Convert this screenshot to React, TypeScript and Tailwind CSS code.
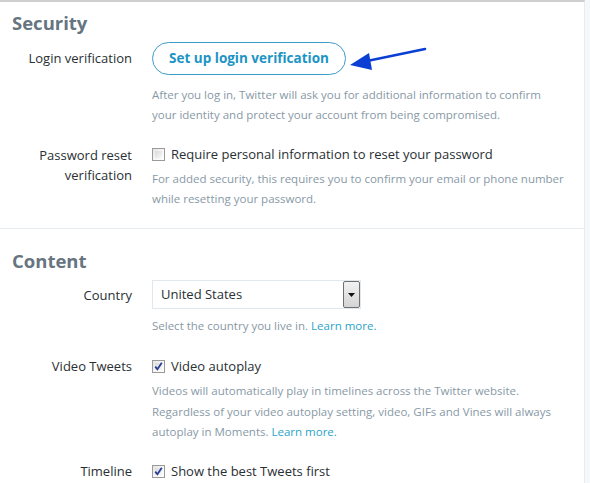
import React from "react";

const font = { fontFamily: '"Open Sans", "Noto Sans", sans-serif' };

function Checkbox({ checked }: { checked?: boolean }) {
  return (
    <span className="relative inline-block w-[13px] h-[13px] shrink-0 border border-[#9a9a9a] bg-gradient-to-br from-[#e4e4e4] via-[#f6f6f6] to-[#ffffff]">
      <span className="absolute inset-[2px] bg-gradient-to-br from-[#dadada] to-[#f8f8f8]" />
      {checked && (
        <svg viewBox="0 0 11 11" className="absolute inset-0 w-[11px] h-[11px]">
          <path d="M2.2 5.6 L4.4 8.2 L8.8 1.8" fill="none" stroke="#2a3f96" strokeWidth="1.8" />
        </svg>
      )}
    </span>
  );
}

function Row({
  label,
  children,
  className = "",
}: {
  label: React.ReactNode;
  children: React.ReactNode;
  className?: string;
}) {
  return (
    <div className={`grid grid-cols-[132px_1fr] gap-x-5 ${className}`}>
      <div className="text-right text-[13px] leading-[20.5px] text-[#292f33]">{label}</div>
      <div>{children}</div>
    </div>
  );
}

function Desc({ children }: { children: React.ReactNode }) {
  return <p className="text-[11.5px] leading-[20.3px] text-[#8899a6]">{children}</p>;
}

export default function App() {
  return (
    <div className="flex w-[590px] h-[483px] overflow-hidden bg-[#f5f8fa]" style={font}>
      <div className="relative w-[585px] shrink-0 bg-white border-t-2 border-r border-t-[#cfcfcf] border-r-[#e6ecf0]">
        {/* Security */}
        <div className="pb-[19px]">
          <h2 className="px-3 pt-[7px] text-[18.5px] leading-[28px] font-bold text-[#66757f]">Security</h2>
          <Row label={<span className="block pt-[6px]">Login verification</span>} className="mt-[5px]">
            <button className="h-[33px] w-[194px] rounded-full border border-[#3d9cc6] text-[13.5px] font-bold text-[#1c94c4]">
              Set up login verification
            </button>
            <div className="mt-[10px]">
              <Desc>
                After you log in, Twitter will ask you for additional information to confirm
                <br />
                your identity and protect your account from being compromised.
              </Desc>
            </div>
          </Row>
          <Row
            label={
              <>
                Password reset
                <br />
                verification
              </>
            }
            className="mt-[19px]"
          >
            <label className="flex items-center gap-[6px] h-[20px] text-[13px] text-[#292f33]">
              <Checkbox />
              Require personal information to reset your password
            </label>
            <div className="mt-[4px]">
              <Desc>
                For added security, this requires you to confirm your email or phone number
                <br />
                while resetting your password.
              </Desc>
            </div>
          </Row>
        </div>

        <div className="border-t border-[#e6ecf0]" />

        {/* Content */}
        <div>
          <h2 className="px-3 pt-[18px] text-[18.5px] leading-[28px] font-bold text-[#66757f]">Content</h2>
          <Row label={<span className="block pt-[5px]">Country</span>} className="mt-[5px]">
            <div className="flex w-[209px] h-[29px] border border-[#e1e8ed] items-center">
              <span className="flex-1 pl-2 text-[13px] text-[#292f33]">United States</span>
              <span className="flex items-center justify-center w-[17px] h-[27px] border border-[#707070] rounded-[2px] bg-gradient-to-b from-[#f2f2f2] to-[#d4d4d4]">
                <svg viewBox="0 0 7 4" className="w-[7px] h-[4px]">
                  <path d="M0 0 H7 L3.5 4 Z" fill="#111" />
                </svg>
              </span>
            </div>
            <div className="mt-[7px]">
              <Desc>
                Select the country you live in. <span className="text-[#2aa3c8]">Learn more.</span>
              </Desc>
            </div>
          </Row>
          <Row label="Video Tweets" className="mt-[20px]">
            <label className="flex items-center gap-[6px] h-[20px] text-[13px] text-[#292f33]">
              <Checkbox checked />
              Video autoplay
            </label>
            <div className="mt-[5px]">
              <Desc>
                Videos will automatically play in timelines across the Twitter website.
                <br />
                Regardless of your video autoplay setting, video, GIFs and Vines will always
                <br />
                autoplay in Moments. <span className="text-[#2aa3c8]">Learn more.</span>
              </Desc>
            </div>
          </Row>
          <Row label="Timeline" className="mt-[19px]">
            <label className="flex items-center gap-[6px] h-[20px] text-[13px] text-[#292f33]">
              <Checkbox checked />
              Show the best Tweets first
            </label>
          </Row>
        </div>

        {/* annotation arrow */}
        <svg className="absolute left-[345px] top-[40px] w-[90px] h-[30px]" viewBox="0 0 90 30">
          <path d="M80 7 L22 19" stroke="#0b3fd4" strokeWidth="2.6" fill="none" strokeLinecap="round" />
          <path d="M5 23 L24 11 L27 28 Z" fill="#0b3fd4" />
        </svg>
      </div>
    </div>
  );
}
